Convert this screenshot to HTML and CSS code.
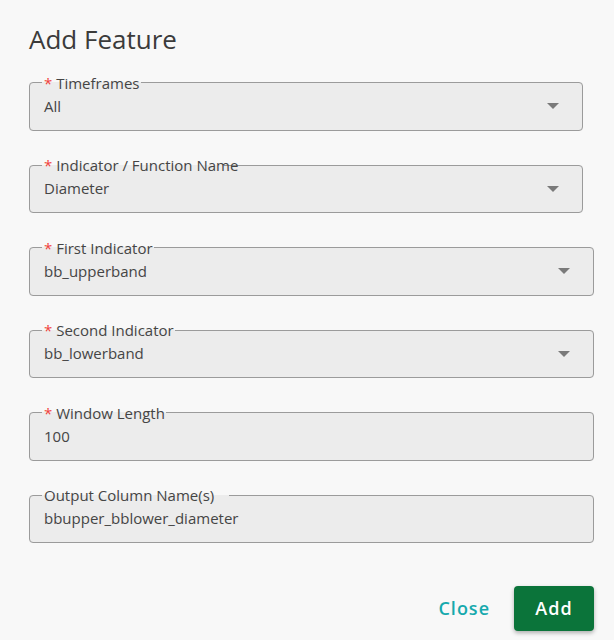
FILE: index.html
```html
<!DOCTYPE html>
<html>
<head>
<meta charset="utf-8">
<link rel="stylesheet" href="styles.css">
</head>
<body>
<div class="dialog">
  <h1 class="title">Add Feature</h1>
  <form class="form">
    <fieldset class="field narrow">
      <legend class="label"><span class="req">*</span> Timeframes</legend>
      <div class="row"><span class="value">All</span><span class="arrow"></span></div>
    </fieldset>
    <fieldset class="field narrow">
      <legend class="label label-tight"><span class="req">*</span> Indicator / Function Name</legend>
      <div class="row"><span class="value">Diameter</span><span class="arrow"></span></div>
    </fieldset>
    <fieldset class="field">
      <legend class="label"><span class="req">*</span> First Indicator</legend>
      <div class="row"><span class="value">bb_upperband</span><span class="arrow"></span></div>
    </fieldset>
    <fieldset class="field">
      <legend class="label"><span class="req">*</span> Second Indicator</legend>
      <div class="row"><span class="value">bb_lowerband</span><span class="arrow"></span></div>
    </fieldset>
    <fieldset class="field">
      <legend class="label"><span class="req">*</span> Window Length</legend>
      <div class="row"><span class="value">100</span></div>
    </fieldset>
    <fieldset class="field">
      <legend class="label label-wide">Output Column Name(s)</legend>
      <div class="row"><span class="value">bbupper_bblower_diameter</span></div>
    </fieldset>
  </form>
  <div class="actions">
    <button class="btn btn-text" type="button">Close</button>
    <button class="btn btn-primary" type="button">Add</button>
  </div>
</div>
</body>
</html>
```
FILE: styles.css
```css
html, body {
  margin: 0;
  padding: 0;
  background: #f8f8f8;
}
body {
  font-family: "Open Sans", "Noto Sans", sans-serif;
  color: #444;
  width: 614px;
  height: 640px;
  overflow: hidden;
}
.dialog {
  padding: 20px 20px 0 29px;
}
.title {
  margin: 0;
  font-size: 26px;
  font-weight: 400;
  line-height: normal;
  color: #3b3b3b;
  padding-top: 1px;
}
.form {
  display: flex;
  flex-direction: column;
  gap: 24.6px;
  margin-top: 15.5px;
}
.field {
  margin: 0;
  min-width: 0;
  padding: 0 14px 14px 14px;
  border: 1px solid #9b9b9b;
  border-radius: 4px;
  background: #ececec;
  box-sizing: border-box;
  width: 565px;
}
.field.narrow {
  width: 554px;
}
.label {
  font-size: 15px;
  line-height: 20px;
  padding: 0 1px 0 2px;
  margin-left: -2px;
  color: #454545;
  white-space: nowrap;
}
.label-tight {
  width: 179px;
  overflow: visible;
}
.label-wide {
  padding-right: 15px;
}
.req {
  color: #f0413b;
}
.row {
  display: flex;
  align-items: center;
  margin-top: 3px;
  height: 20px;
}
.value {
  flex: 1;
  font-size: 15px;
  line-height: 20px;
  color: #454545;
}
.arrow {
  width: 0;
  height: 0;
  border-left: 6.5px solid transparent;
  border-right: 6.5px solid transparent;
  border-top: 6px solid #7a7a7a;
  margin-right: 9px;
  margin-top: 1px;
}
.actions {
  display: flex;
  justify-content: flex-end;
  align-items: center;
  gap: 20px;
  margin-top: 42.5px;
}
.btn {
  font-family: "Open Sans", "Noto Sans", sans-serif;
  font-size: 18px;
  font-weight: 600;
  letter-spacing: 1px;
  border: none;
  border-radius: 4px;
  height: 45px;
  cursor: pointer;
}
.btn-text {
  background: transparent;
  color: #16a9ad;
  padding: 0 4px;
}
.btn-primary {
  background: #0b743a;
  color: #fff;
  width: 80px;
  padding: 0;
  box-shadow: 0 2px 4px rgba(0, 0, 0, 0.3);
}
```
